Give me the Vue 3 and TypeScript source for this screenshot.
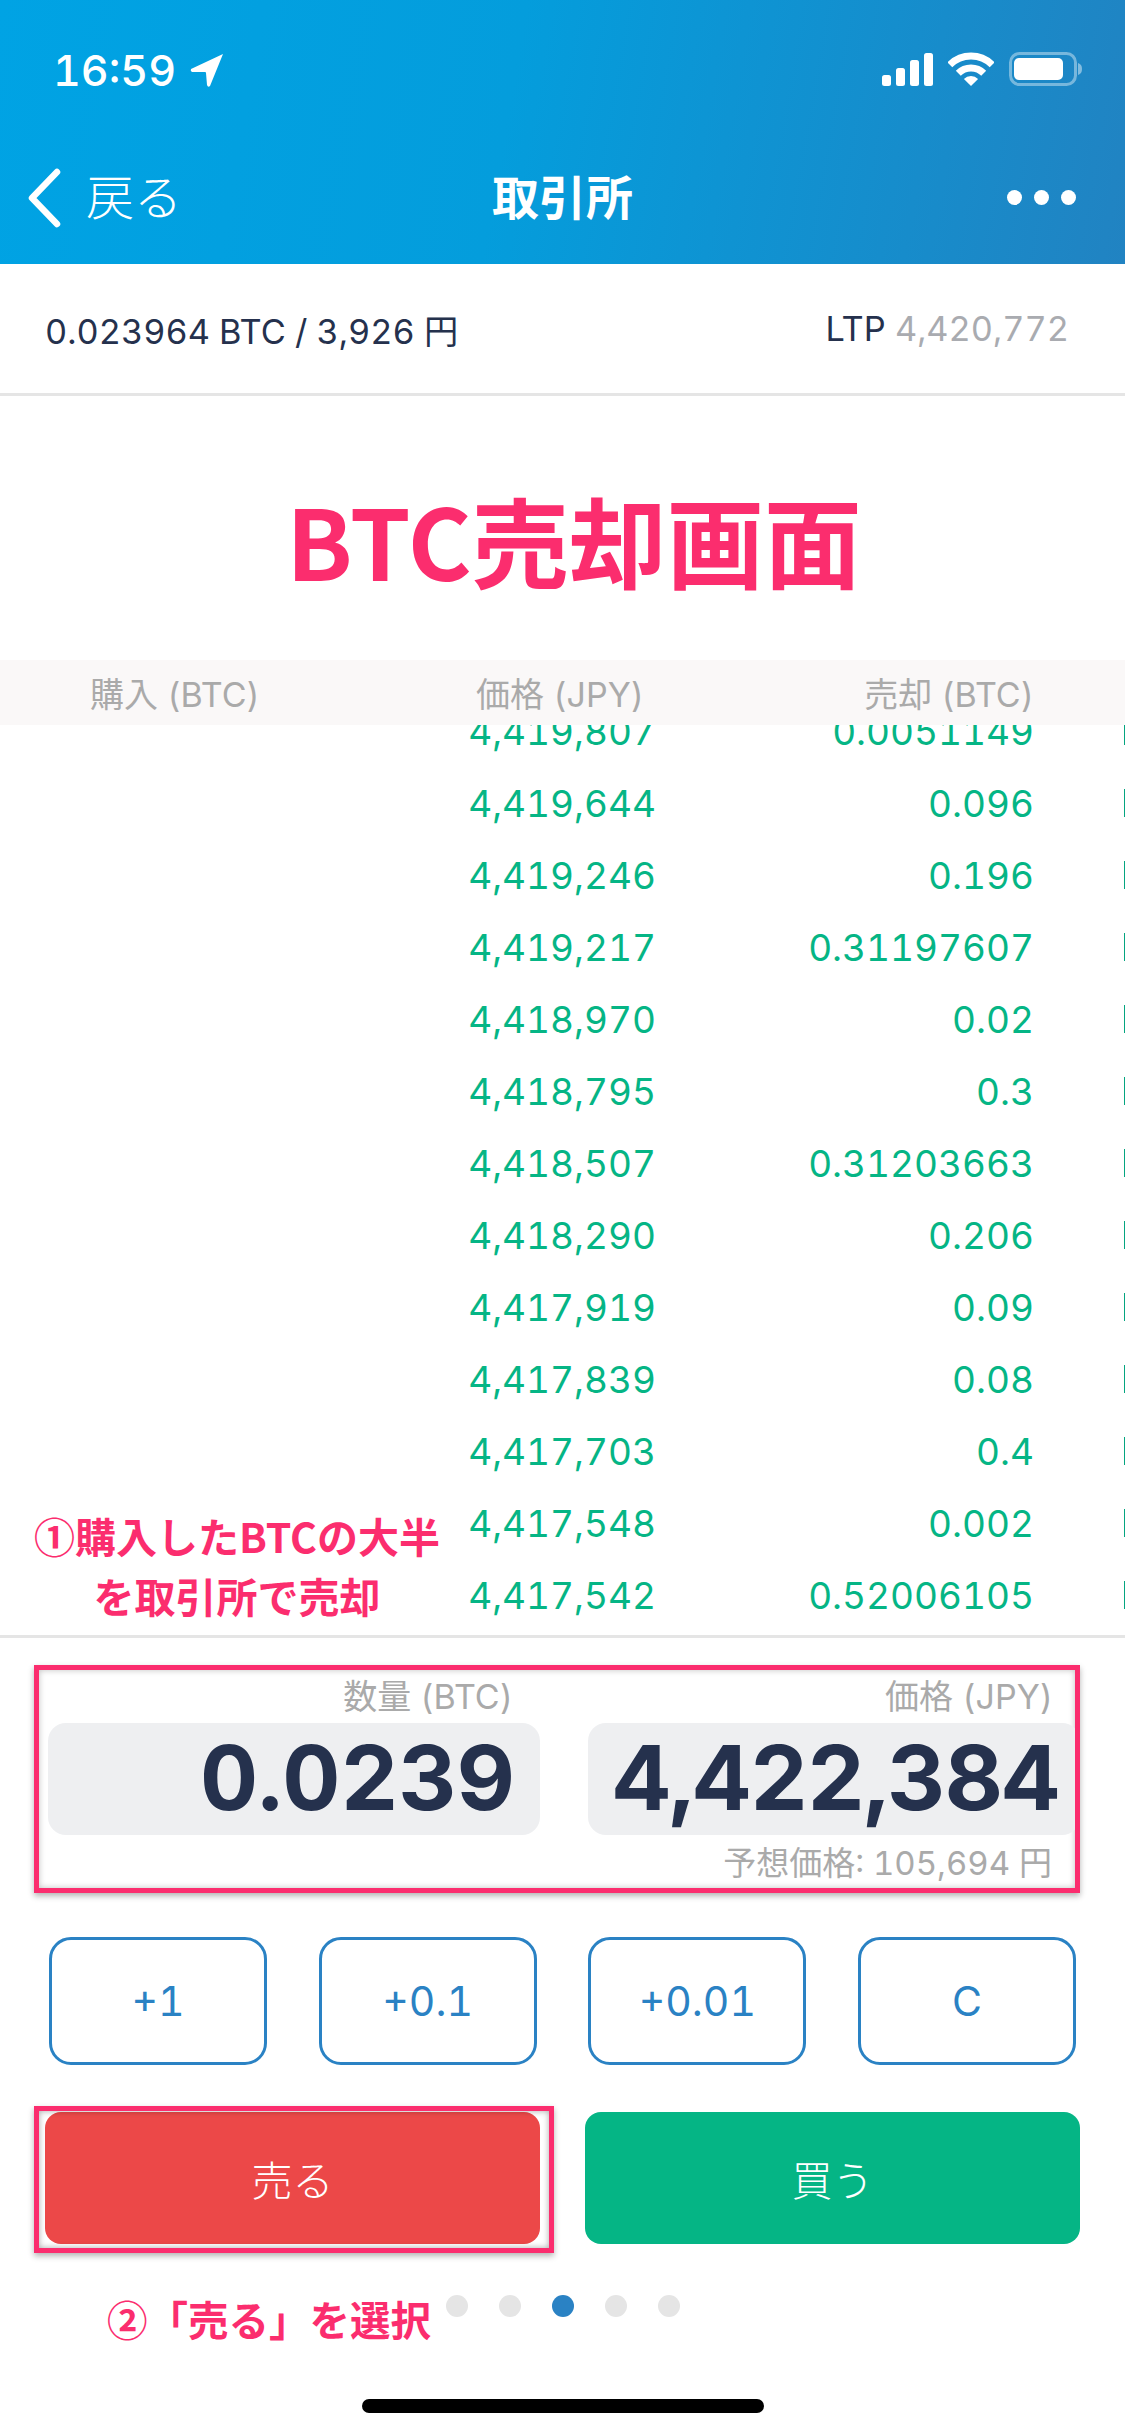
<template>
  <div class="screen">
    <!-- ステータスバー + ナビ -->
    <header class="top">
      <div class="status">
        <div class="status-left">
          <span class="time">16:59</span>
          <svg class="loc" width="36" height="36" viewBox="0 0 36 36">
            <path d="M34 2 L2 17 Q1 19 3 20 L16 20 Q17 20 17 21 L18 33 Q19 36 21 34 Z" fill="#fff" />
          </svg>
        </div>
        <div class="status-right">
          <svg width="51" height="33" viewBox="0 0 51 33">
            <rect x="0" y="22" width="9" height="11" rx="2.5" fill="#fff" />
            <rect x="14" y="15" width="9" height="18" rx="2.5" fill="#fff" />
            <rect x="28" y="7" width="9" height="26" rx="2.5" fill="#fff" />
            <rect x="42" y="0" width="9" height="33" rx="2.5" fill="#fff" />
          </svg>
          <svg width="46" height="34" viewBox="0 0 46 34" fill="none" stroke="#fff" stroke-width="7">
            <path d="M1.800 12.800 A30 30 0 0 1 44.200 12.800" />
            <path d="M10.300 21.300 A18 18 0 0 1 35.700 21.300" />
            <path d="M23 34 L15.900 26.900 A10 10 0 0 1 30.100 26.900 Z" fill="#fff" stroke="none" />
          </svg>
          <svg width="73" height="34" viewBox="0 0 73 34" fill="none">
            <rect x="1.500" y="1.500" width="65" height="31" rx="9" stroke="#fff" stroke-opacity="0.4" stroke-width="3" />
            <rect x="5" y="6" width="49" height="22" rx="5" fill="#fff" />
            <path d="M69 11 C72 12 73 14 73 17 C73 20 72 22 69 23 Z" fill="#fff" fill-opacity="0.45" />
          </svg>
        </div>
      </div>
      <nav class="nav">
        <div class="back">
          <svg width="36" height="60" viewBox="0 0 36 60" fill="none">
            <path d="M31 4 L6 30 L31 56" stroke="#fff" stroke-width="6.500" stroke-linecap="round" stroke-linejoin="round" />
          </svg>
          <span>戻る</span>
        </div>
        <div class="nav-title">取引所</div>
        <div class="more"><i></i><i></i><i></i></div>
      </nav>
    </header>

    <div class="info">
      <span>0.023964 BTC / 3,926 円</span>
      <span>LTP <em>4,420,772</em></span>
    </div>

    <div class="banner">BTC売却画面</div>

    <div class="board">
      <div class="board-head">
        <span>購入 (BTC)</span>
        <span>価格 (JPY)</span>
        <span>売却 (BTC)</span>
      </div>
      <div class="rows">
        <div v-for="r in rows" :key="r.price" class="row">
          <span class="price">{{ r.price }}</span>
          <span class="amount">{{ r.amount }}</span>
          <i class="tick"></i>
        </div>
      </div>
      <div class="note note-1">①購入したBTCの大半<br />を取引所で売却</div>
    </div>

    <section class="order">
      <div class="fields">
        <div class="field">
          <label>数量 (BTC)</label>
          <div class="value">0.0239</div>
        </div>
        <div class="field">
          <label>価格 (JPY)</label>
          <div class="value value-price">4,422,384</div>
        </div>
        <div class="estimate">予想価格: 105,694 円</div>
      </div>

      <div class="steps">
        <button v-for="s in steps" :key="s">{{ s }}</button>
      </div>

      <div class="actions">
        <div class="sell-mark">
          <button class="sell">売る</button>
        </div>
        <button class="buy">買う</button>
      </div>
    </section>

    <footer class="foot">
      <div class="note note-2">②「売る」を選択</div>
      <div class="dots">
        <i v-for="n in 5" :key="n" :class="{ on: n === 3 }"></i>
      </div>
      <div class="home"></div>
    </footer>
  </div>
</template>

<script setup lang="ts">
interface Row {
  price: string
  amount: string
}

const rows: Row[] = [
  { price: '4,419,807', amount: '0.0051149' },
  { price: '4,419,644', amount: '0.096' },
  { price: '4,419,246', amount: '0.196' },
  { price: '4,419,217', amount: '0.31197607' },
  { price: '4,418,970', amount: '0.02' },
  { price: '4,418,795', amount: '0.3' },
  { price: '4,418,507', amount: '0.31203663' },
  { price: '4,418,290', amount: '0.206' },
  { price: '4,417,919', amount: '0.09' },
  { price: '4,417,839', amount: '0.08' },
  { price: '4,417,703', amount: '0.4' },
  { price: '4,417,548', amount: '0.002' },
  { price: '4,417,542', amount: '0.52006105' },
]

const steps = ['+1', '+0.1', '+0.01', 'C']
</script>

<style>
html, body { margin: 0; background: #fff; }
</style>

<style scoped>
.screen {
  width: 1125px;
  height: 2436px;
  overflow: hidden;
  position: relative;
  background: #fff;
  font-family: Inter, "Noto Sans CJK JP", sans-serif;
  font-variant-numeric: tabular-nums;
  color: #25314d;
}

/* header */
.top {
  height: 264px;
  box-sizing: border-box;
  background: linear-gradient(100deg, #00a3e4 0%, #049ddc 45%, #2183c2 100%);
  color: #fff;
}
.status {
  height: 140px;
  box-sizing: border-box;
  padding: 52px 43px 0 53px;
  display: flex;
  justify-content: space-between;
  align-items: flex-start;
}
.status-left { display: flex; align-items: center; gap: 13px; }
.time { font-size: 43px; font-weight: 500; line-height: 34px; }
.status-right { display: flex; align-items: center; gap: 15px; }

.nav {
  height: 124px;
  box-sizing: border-box;
  padding: 0 49px 0 26px;
  display: flex;
  align-items: flex-start;
  position: relative;
}
.back { display: flex; align-items: center; gap: 24px; font-size: 48px; font-weight: 300; line-height: 60px; margin-top: 28px; }
.nav-title {
  position: absolute;
  left: 0;
  right: 0;
  top: 30px;
  text-align: center;
  font-size: 47px;
  font-weight: 700;
  line-height: 56px;
}
.more { margin-left: auto; margin-top: 50px; display: flex; gap: 12px; }
.more i { width: 15px; height: 15px; border-radius: 50%; background: #fff; }

/* info */
.info {
  height: 132px;
  box-sizing: border-box;
  border-bottom: 3px solid #e5e5e5;
  padding: 0 56px 0 45px;
  display: flex;
  justify-content: space-between;
  align-items: center;
  font-size: 34.300px;
}
.info em { font-style: normal; color: #a9abb0; }

.banner {
  height: 264px;
  display: flex;
  align-items: center;
  justify-content: center;
  padding: 21px 0 0 23px;
  box-sizing: border-box;
  font-family: "Noto Sans CJK JP", sans-serif;
  font-size: 97.500px;
  font-weight: 700;
  color: #fb2d6e;
}

/* board */
.board {
  height: 978px;
  box-sizing: border-box;
  border-bottom: 3px solid #e5e5e5;
  position: relative;
  overflow: hidden;
}
.board-head {
  height: 65px;
  background: #faf8f8;
  position: relative;
  z-index: 1;
  display: grid;
  grid-template-columns: 258px 386px 390px;
  align-items: center;
  font-size: 34px;
  color: #aaaaaa;
  text-align: right;
}
.board-head span:first-child { text-align: left; padding-left: 90px; white-space: nowrap; }
.rows { margin-top: -30px; }
.row {
  height: 72px;
  display: grid;
  grid-template-columns: 656px 378px 1fr;
  align-items: center;
  font-size: 37px;
  color: #05b585;
  text-align: right;
}
.tick { justify-self: end; width: 1px; height: 28px; background: #05a580; }

.note {
  font-family: "Noto Sans CJK JP", sans-serif;
  font-weight: 700;
  color: #fb2d6e;
  text-shadow: 0 0 4px #fff;
  white-space: nowrap;
}
.note-1 {
  position: absolute;
  left: 32px;
  top: 845px;
  width: 410px;
  text-align: center;
  font-size: 41px;
  line-height: 60px;
}

/* order */
.order { height: 612px; box-sizing: border-box; padding-top: 27px; }
.fields {
  margin: 0 45px 0 34px;
  height: 228px;
  box-sizing: border-box;
  border: 5px solid #fb2d6e;
  box-shadow: 0 3px 6px rgba(0, 0, 0, 0.3), inset 0 0 6px rgba(0, 0, 0, 0.25);
  padding: 0 0 0 9px;
  display: grid;
  grid-template-columns: 492px 492px;
  grid-template-rows: 53px 112px 56px;
  column-gap: 48px;
  overflow: hidden;
}
.field { display: contents; }
.field:nth-child(1) label, .field:nth-child(1) .value { grid-column: 1; }
.field:nth-child(2) label, .field:nth-child(2) .value { grid-column: 2; }
.field label {
  grid-row: 1;
  line-height: 53px;
  padding-right: 27px;
  text-align: right;
  font-size: 34px;
  color: #aaaaaa;
}
.value {
  grid-row: 2;
  border-radius: 18px;
  background: #eeeff1;
  box-sizing: border-box;
  padding-right: 25px;
  line-height: 110px;
  text-align: right;
  font-size: 90px;
  font-weight: 700;
  color: #25314d;
}
.value-price { padding-right: 21px; letter-spacing: -1px; }
.estimate {
  grid-column: 1 / 3;
  grid-row: 3;
  padding-right: 28px;
  text-align: right;
  font-size: 33px;
  line-height: 56px;
  color: #aaaaaa;
}

.steps {
  margin: 44px 49px 0;
  display: grid;
  grid-template-columns: repeat(4, 218px);
  justify-content: space-between;
}
.steps button {
  height: 128px;
  background: #fff;
  border: 3px solid #2a82c4;
  border-radius: 22px;
  font: 400 41px Inter, sans-serif;
  font-variant-numeric: tabular-nums;
  color: #2a82c4;
}

.actions {
  margin: 47px 45px 0;
  display: grid;
  grid-template-columns: 495px 495px;
  justify-content: space-between;
  align-items: start;
}
.actions button {
  height: 132px;
  width: 495px;
  border: 0;
  border-radius: 16px;
  color: #fff;
  font: 300 41px Inter, "Noto Sans CJK JP", sans-serif;
}
.sell-mark { position: relative; height: 132px; }
.sell-mark::after {
  content: "";
  position: absolute;
  left: -11px;
  right: -14px;
  top: -6px;
  bottom: -9px;
  border: 5px solid #fb2d6e;
  box-shadow: 0 3px 6px rgba(0, 0, 0, 0.3), inset 0 0 6px rgba(0, 0, 0, 0.35);
}
.sell { background: #ec4848; display: block; }
.buy { background: #05b585; }

/* foot */
.foot { position: relative; height: 186px; }
.dots { position: absolute; left: 446px; top: 45px; display: flex; gap: 31px; }
.dots i { width: 22px; height: 22px; border-radius: 50%; background: #e5e5e5; }
.dots i.on { background: #2a82c4; }
.note-2 {
  position: absolute;
  left: 107px;
  top: 46px;
  font-size: 40.500px;
  line-height: 46px;
}
.home {
  position: absolute;
  left: 362px;
  top: 149px;
  width: 402px;
  height: 14px;
  border-radius: 7px;
  background: #000;
}
</style>
